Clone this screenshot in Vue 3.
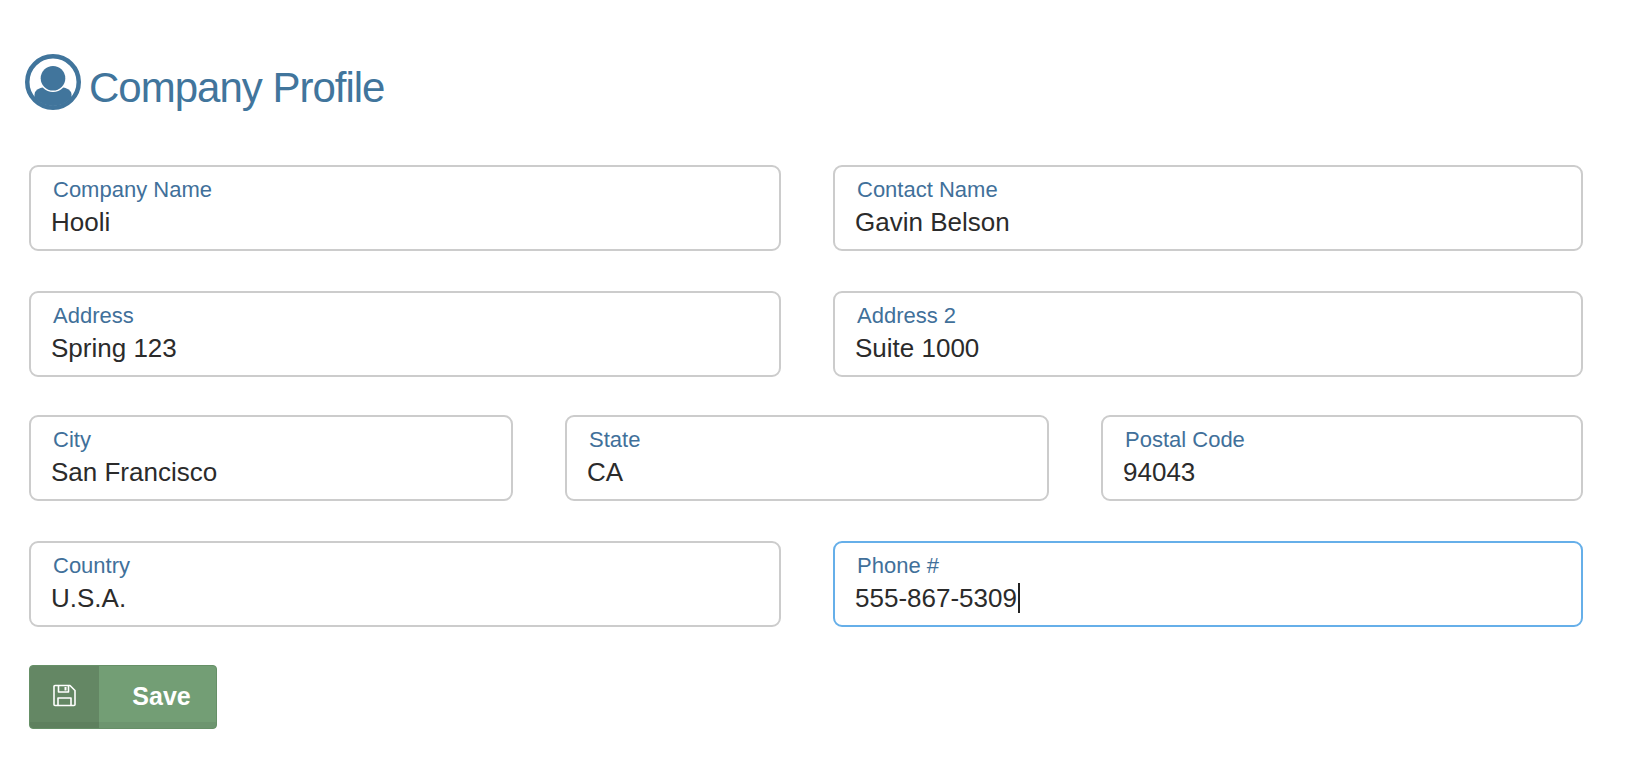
<script setup>
const rows = [
  { cols: 2, fields: [{ label: 'Company Name', value: 'Hooli' }, { label: 'Contact Name', value: 'Gavin Belson' }] },
  { cols: 2, fields: [{ label: 'Address', value: 'Spring 123' }, { label: 'Address 2', value: 'Suite 1000' }] },
  { cols: 3, fields: [{ label: 'City', value: 'San Francisco' }, { label: 'State', value: 'CA' }, { label: 'Postal Code', value: '94043' }] },
  { cols: 2, fields: [{ label: 'Country', value: 'U.S.A.' }, { label: 'Phone #', value: '555-867-5309', focused: true }] }
]
</script>
<template>
  <div class="page">
    <h1 class="title">
      <svg class="title-icon" viewBox="0 0 56 56">
        <defs>
          <clipPath id="inner"><circle cx="28" cy="28" r="24" /></clipPath>
        </defs>
        <circle cx="28" cy="28" r="25.750" fill="none" stroke="#41759c" stroke-width="4.500" />
        <g clip-path="url(#inner)">
          <path fill="#41759c" d="M9.500 56V40.500c0-3 2-5 6-6.500l6-1.500h13l6 1.500c4 1.500 6 3.500 6 6.500V56z" />
          <circle cx="28" cy="24.300" r="13.800" fill="#fff" />
          <circle cx="28" cy="24.300" r="12.300" fill="#41759c" />
        </g>
      </svg>
      <span class="title-text">Company Profile</span>
    </h1>
    <form class="form" @submit.prevent>
      <div v-for="(row, i) in rows" :key="i" class="row" :class="row.cols === 3 ? 'row-3' : 'row-2'">
        <div v-for="f in row.fields" :key="f.label" class="field" :class="{ focused: f.focused }">
          <label class="label">{{ f.label }}</label>
          <div class="value">{{ f.value }}<span v-if="f.focused" class="caret"></span></div>
        </div>
      </div>
      <button class="save" type="submit">
        <span class="save-icon">
          <svg width="23" height="23" viewBox="0 0 23 23" fill="none" stroke="#fff" stroke-width="1.600" stroke-linejoin="round">
            <path d="M1 2.500a1 1 0 0 1 1-1h15l5 5v14a1 1 0 0 1-1 1h-19a1 1 0 0 1-1-1z" />
            <path d="M5.500 1.500v6.500h10v-6.500" />
            <path d="M5 21.500v-7.500h13v7.500" />
            <path d="M12.500 3v3.500" stroke-width="2" />
          </svg>
        </span>
        <span class="save-text">Save</span>
      </button>
    </form>
  </div>
</template>
<style scoped>
.page {
  padding: 54px 56px 0 25px;
  font-family: "Liberation Sans", Arial, sans-serif;
}

.title {
  display: flex;
  align-items: center;
  gap: 8px;
  margin: 0;
  height: 56px;
  font-size: 42px;
  font-weight: 400;
  letter-spacing: -1px;
  color: #41759c;
}

.title-icon {
  width: 56px;
  height: 56px;
  flex: none;
}

.title-text {
  padding-top: 12px;
}

.form {
  margin: 55px 0 0 4px;
}

.row {
  display: grid;
  column-gap: 52px;
  margin-bottom: 40px;
}

.row-2 {
  grid-template-columns: 752fr 750fr;
}

.row-3 {
  grid-template-columns: 484fr 484fr 482fr;
  margin-top: -2px;
}

.field {
  box-sizing: border-box;
  height: 86px;
  padding: 11px 22px 0 20px;
  background: #fff;
  border: 2px solid #cccccc;
  border-radius: 9px;
}

.field.focused {
  border-color: #66afe9;
}

.label {
  display: block;
  margin-left: 2px;
  font-size: 22px;
  line-height: 24px;
  color: #41709a;
}

.value {
  display: flex;
  align-items: center;
  margin-top: 3px;
  font-size: 26px;
  line-height: 34px;
  color: #2b2b2b;
}

.caret {
  width: 2px;
  height: 30px;
  margin-left: 1px;
  background: #222;
}

.save {
  display: flex;
  align-items: stretch;
  width: 188px;
  height: 64px;
  margin-top: -2px;
  padding: 0;
  overflow: hidden;
  border: 1px solid #669067;
  border-radius: 4px;
  background: #739e75;
  font-family: inherit;
  color: #fff;
}

.save-icon {
  display: flex;
  align-items: center;
  justify-content: center;
  width: 69px;
  padding-bottom: 4px;
  background: #648764;
  box-shadow: inset 0 -6px 0 rgba(0, 0, 0, 0.05);
}

.save-text {
  flex: 1;
  padding-left: 8px;
  font-size: 25px;
  font-weight: 700;
  line-height: 60px;
  text-align: center;
  box-shadow: inset 0 -6px 0 rgba(0, 0, 0, 0.05);
}
</style>
